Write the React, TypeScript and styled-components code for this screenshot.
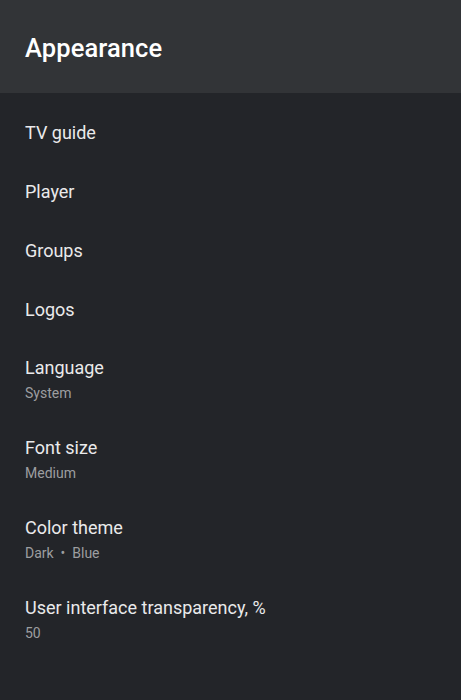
import { createGlobalStyle, styled } from "styled-components";

const GlobalStyle = createGlobalStyle`
  html, body {
    margin: 0;
    padding: 0;
    background: #232529;
  }
  body {
    font-family: Roboto, "Noto Sans", sans-serif;
  }
`;

type Item = { title: string; value?: string };

const items: Item[] = [
  { title: "TV guide" },
  { title: "Player" },
  { title: "Groups" },
  { title: "Logos" },
  { title: "Language", value: "System" },
  { title: "Font size", value: "Medium" },
  { title: "Color theme", value: "Dark  •  Blue" },
  { title: "User interface transparency, %", value: "50" },
];

function App() {
  return (
    <>
      <GlobalStyle />
      <Screen>
        <Header>
          <Title>Appearance</Title>
        </Header>
        <List>
          {items.map((item) => (
            <Row key={item.title} $double={!!item.value}>
              <RowTitle>{item.title}</RowTitle>
              {item.value && <RowValue>{item.value}</RowValue>}
            </Row>
          ))}
        </List>
      </Screen>
    </>
  );
}

const Screen = styled.div`
  width: 461px;
  height: 700px;
  background: #232529;
  display: flex;
  flex-direction: column;
  overflow: hidden;
`;

const Header = styled.header`
  height: 93px;
  background: #323437;
  display: flex;
  align-items: center;
  padding: 2px 25px 0;
  box-sizing: border-box;
`;

const Title = styled.h1`
  margin: 0;
  font-size: 25.5px;
  font-weight: 500;
  color: #ffffff;
  letter-spacing: 0.1px;
`;

const List = styled.ul`
  list-style: none;
  margin: 0;
  padding: 11px 0 0;
`;

const Row = styled.li<{ $double: boolean }>`
  display: flex;
  flex-direction: column;
  gap: 6px;
  padding: ${(p) => (p.$double ? "18px 25px 17px" : "19px 25px 20px")};
  cursor: pointer;
`;

const RowTitle = styled.span`
  font-size: 18px;
  line-height: 20px;
  color: #eaeaeb;
`;

const RowValue = styled.span`
  font-size: 14px;
  line-height: 19px;
  color: #9d9ea0;
  white-space: pre;
`;

export default App;
